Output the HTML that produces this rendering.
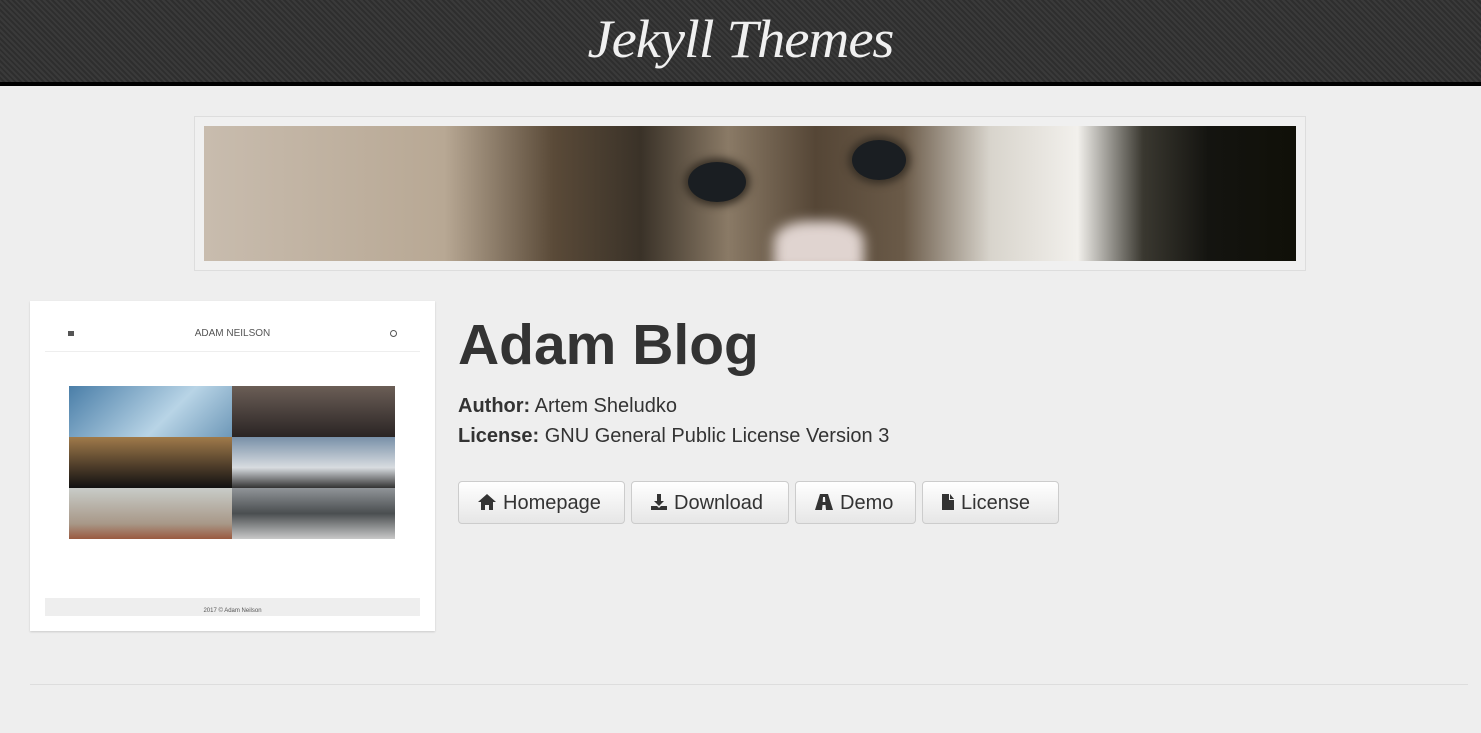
<!DOCTYPE html>
<html><head><meta charset="utf-8"><style>
body{margin:0;background:#eee;font-family:"Liberation Sans",sans-serif;width:1481px;height:733px;overflow:hidden;position:relative;color:#333}
.hd{position:absolute;left:0;top:0;width:1481px;height:82px;background:#333 repeating-linear-gradient(45deg,#3a3a3a 0 2px,#2e2e2e 2px 4px);border-bottom:4px solid #000}
.hd span{position:absolute;left:0;right:0;top:8px;text-align:center;font-family:"Liberation Serif",serif;font-style:italic;font-size:54px;color:#f0f0f0;letter-spacing:-1px;transform:scaleX(1.05)}
.bf{position:absolute;left:194px;top:116px;width:1110px;height:153px;border:1px solid #ddd;background:#f0f0f0}
.bi{position:absolute;left:204px;top:126px;width:1092px;height:135px;overflow:hidden;background:linear-gradient(90deg,#c8bcae 0%,#b8a894 22%,#5a4a38 32%,#3a3228 40%,#8a7a66 48%,#554636 56%,#6a5a48 64%,#d8d4cc 72%,#f2f0ec 80%,#3a3830 86%,#141410 92%,#101008 100%)}
.eye{position:absolute;border-radius:50%;background:#1a1e22;box-shadow:0 0 8px 4px #3a3228}
.card{position:absolute;left:30px;top:301px;width:405px;height:330px;background:#fff;box-shadow:0 1px 2px rgba(0,0,0,.15)}
.t{position:absolute;left:458px;top:312px;font-size:57px;font-weight:bold;margin:0}
.m{position:absolute;left:458px;font-size:20px}
.btn{position:absolute;top:481px;height:43px;border:1px solid #ccc;border-radius:4px;background:linear-gradient(#fff,#e6e6e6);font-size:20px;line-height:43px;box-sizing:border-box;padding-left:18px;color:#333}
.btn svg{vertical-align:-2px;margin-right:6px}
.hr{position:absolute;left:30px;top:684px;width:1438px;border-top:1px solid #ddd}
</style></head><body>
<div class="hd"><span>Jekyll Themes</span></div>
<div class="bf"></div>
<div class="bi">
<div class="eye" style="left:484px;top:36px;width:58px;height:40px"></div>
<div class="eye" style="left:648px;top:14px;width:54px;height:40px"></div>
<div style="position:absolute;left:570px;top:95px;width:90px;height:50px;background:#e0d4d0;border-radius:40% 40% 0 0;filter:blur(6px)"></div>
</div>
<div class="card">
<div style="position:absolute;left:38px;top:30px;width:6px;height:5px;background:#555"></div>
<div style="position:absolute;left:0;right:0;top:27px;text-align:center;font-size:10px;color:#555">ADAM NEILSON</div>
<div style="position:absolute;left:360px;top:29px;width:5px;height:5px;border:1px solid #555;border-radius:50%"></div>
<div style="position:absolute;left:15px;top:50px;width:375px;border-top:1px solid #eee"></div>
<div style="position:absolute;left:39px;top:85px;width:163px;height:51px;background:linear-gradient(135deg,#4a7ea8,#b8d4e6 60%,#6e98b8)"></div>
<div style="position:absolute;left:202px;top:85px;width:163px;height:51px;background:linear-gradient(#6b5e56,#2a2424)"></div>
<div style="position:absolute;left:39px;top:136px;width:163px;height:51px;background:linear-gradient(#a07a4a,#4a3a28 60%,#111)"></div>
<div style="position:absolute;left:202px;top:136px;width:163px;height:51px;background:linear-gradient(#7890a8,#d8dce0 60%,#333)"></div>
<div style="position:absolute;left:39px;top:187px;width:163px;height:51px;background:linear-gradient(#c8ccc8,#a89888 70%,#9a5a40)"></div>
<div style="position:absolute;left:202px;top:187px;width:163px;height:51px;background:linear-gradient(#909498,#4a4e50 50%,#c8c8c8)"></div>
<div style="position:absolute;left:15px;top:297px;width:375px;height:18px;background:#eee;font-size:6px;text-align:center;line-height:26px;color:#555">2017 © Adam Neilson</div>
</div>
<h1 class="t">Adam Blog</h1>
<div class="m" style="top:395px"><b>Author:</b> Artem Sheludko</div>
<div class="m" style="top:425px"><b>License:</b> GNU General Public License Version 3</div>
<div class="btn" style="left:458px;width:167px"><svg width="20" height="18" viewBox="0 0 20 18"><path d="M10 1L1 9h3v8h4v-5h4v5h4V9h3z" fill="#333"/></svg>Homepage</div>
<div class="btn" style="left:631px;width:158px"><svg width="18" height="18" viewBox="0 0 18 18"><path d="M7 1h4v7h3l-5 5-5-5h3zM1 13h6l2 2 2-2h6v4H1z" fill="#333"/></svg>Download</div>
<div class="btn" style="left:795px;width:121px"><svg width="20" height="18" viewBox="0 0 20 18"><path d="M6 1h8l5 16h-7l-.5-5h-3L8 17H1zM9 4l-.3 5h2.6L11 4z" fill="#333"/></svg>Demo</div>
<div class="btn" style="left:922px;width:137px"><svg width="14" height="18" viewBox="0 0 14 18"><path d="M1 1h7v6h5v10H1zM9 1l4 5H9z" fill="#333"/></svg>License</div>
<div class="hr"></div>
</body></html>
